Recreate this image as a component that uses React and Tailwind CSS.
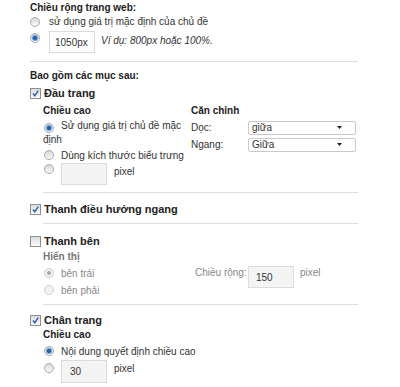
import React from 'react';

function Radio({ checked = false, disabled = false, className = '' }) {
  return (
    <span
      className={`inline-flex shrink-0 items-center justify-center w-[10px] h-[10px] rounded-full border ${
        disabled ? 'border-[#cfcfcf] bg-[#f2f2f2]' : 'border-[#a9a9a9] bg-gradient-to-b from-[#d8d8d8] to-[#fbfbfb]'
      } ${className}`}
    >
      {checked && (
        <span
          className={`block w-[4px] h-[4px] rounded-full ${
            disabled ? 'bg-[#a8a8a8]' : 'bg-[#1f5fae] ring-1 ring-[#6d9fd6]'
          }`}
        />
      )}
    </span>
  );
}

function Checkbox({ checked = false }) {
  return (
    <span className="relative inline-block shrink-0 w-[11px] h-[11px] border border-[#8e8f8f] bg-gradient-to-b from-[#dcdcdc] to-[#fafafa]">
      {checked && (
        <svg viewBox="0 0 11 11" className="absolute left-[-1px] top-[-1px] w-[11px] h-[11px]">
          <path d="M3 5.5 L4.8 7.8 L8.2 2.6" fill="none" stroke="#2a5ea9" strokeWidth="1.4" />
        </svg>
      )}
    </span>
  );
}

function TextBox({ value = '', gray = true, className = '' }) {
  return (
    <div
      className={`flex shrink-0 items-center w-[46px] h-[22px] border border-[#dcdcdc] whitespace-nowrap text-[10px] text-[#333] ${
        gray ? 'bg-[#f4f4f4]' : 'bg-white'
      } ${className}`}
    >
      {value}
    </div>
  );
}

function Select({ value }) {
  return (
    <div className="flex items-center justify-between w-[108px] h-[14px] pl-[3px] pr-[13px] border border-[#cacaca] rounded-[2px] bg-white text-[#333]">
      <span className="leading-[12px]">{value}</span>
      <svg viewBox="0 0 5 3" className="w-[5px] h-[3px]">
        <path d="M0 0 H5 L2.5 3 Z" fill="#222" />
      </svg>
    </div>
  );
}

function Section({ checked, label }) {
  return (
    <div className="flex items-center h-[14px] gap-[3px]">
      <Checkbox checked={checked} />
      <span className="text-[11px] font-bold text-[#222] leading-[14px]">{label}</span>
    </div>
  );
}

export default function App() {
  return (
    <div className="w-[400px] h-[387px] overflow-hidden bg-white font-['Liberation_Sans',Arial,sans-serif] text-[10px] text-[#333]">
      <div className="w-[358px] pl-[30px]">
        <div className="h-[15px] leading-[15px] font-bold text-[#222]">Chiều rộng trang web:</div>
        <div className="flex items-center h-[14px] gap-[9px]">
          <Radio />
          <span className="leading-[14px]">sử dụng giá trị mặc định của chủ đề</span>
        </div>
        <div className="flex items-start mt-[2px] h-[22px]">
          <Radio checked className="mt-[2px]" />
          <TextBox value="1050px" gray={false} className="ml-[9px] pl-[5px]" />
          <span className="ml-[6px] mt-[4px] leading-[12px] italic">Ví dụ: 800px hoặc 100%.</span>
        </div>

        <div className="mt-[8px] h-px bg-[#dedede]" />

        <div className="mt-[7px] h-[14px] leading-[14px] font-bold text-[#222]">Bao gồm các mục sau:</div>
        <div className="mt-[3px]">
          <Section checked label="Đầu trang" />
        </div>

        <div className="flex pl-[13px]">
          <div className="w-[146px]">
            <div className="mt-[4px] h-[14px] leading-[14px] font-bold text-[#222]">Chiều cao</div>
            <div className="mt-[1px] leading-[14px]">
              <Radio checked className="ml-[1px] mr-[7px] align-[-1px]" />
              Sử dụng giá trị chủ đề mặc định
            </div>
            <div className="flex items-center mt-[1px] h-[14px] gap-[7px] pl-[1px]">
              <Radio />
              <span>Dùng kích thước biểu trưng</span>
            </div>
            <div className="flex items-start mt-[1px] h-[22px] pl-[1px]">
              <Radio className="mt-[1px]" />
              <TextBox className="ml-[7px]" />
              <span className="ml-[7px] mt-[2px] leading-[14px]">pixel</span>
            </div>
          </div>
          <div className="pl-[2px]">
            <div className="mt-[4px] h-[14px] leading-[14px] font-bold text-[#222]">Căn chỉnh</div>
            <div className="flex items-center mt-[2px]">
              <span className="w-[57px]">Dọc:</span>
              <Select value="giữa" />
            </div>
            <div className="flex items-center mt-[2px]">
              <span className="w-[57px]">Ngang:</span>
              <Select value="Giữa" />
            </div>
          </div>
        </div>

        <div className="mt-[7px] ml-[13px] h-px bg-[#dedede]" />

        <div className="mt-[9px]">
          <Section checked label="Thanh điều hướng ngang" />
        </div>

        <div className="mt-[7px] ml-[13px] h-px bg-[#dedede]" />

        <div className="mt-[10px]">
          <Section label="Thanh bên" />
        </div>
        <div className="pl-[13px] text-[#888]">
          <div className="mt-[2px] h-[14px] leading-[14px] font-bold text-[#777]">Hiển thị</div>
          <div className="flex mt-[2px]">
            <div className="w-[152px]">
              <div className="flex items-center h-[14px] gap-[7px] pl-[1px]">
                <Radio checked disabled />
                <span>bên trái</span>
              </div>
              <div className="flex items-center mt-[3px] h-[14px] gap-[7px] pl-[1px]">
                <Radio disabled />
                <span>bên phải</span>
              </div>
            </div>
            <div className="flex items-start h-[22px]">
              <span className="w-[53px] shrink-0 whitespace-nowrap leading-[14px]">Chiều rộng:</span>
              <TextBox value="150" className="pl-[7px]" />
              <span className="ml-[6px] leading-[14px]">pixel</span>
            </div>
          </div>
        </div>

        <div className="mt-[7px] ml-[13px] h-px bg-[#dedede]" />

        <div className="mt-[8px]">
          <Section checked label="Chân trang" />
        </div>
        <div className="pl-[13px]">
          <div className="mt-[1px] h-[14px] leading-[14px] font-bold text-[#222]">Chiều cao</div>
          <div className="flex items-center mt-[2px] h-[14px] gap-[7px] pl-[1px]">
            <Radio checked />
            <span>Nội dung quyết định chiều cao</span>
          </div>
          <div className="flex items-start mt-[2px] h-[23px] pl-[1px]">
            <Radio className="mt-[3px]" />
            <TextBox value="30" className="ml-[7px] h-[23px] pl-[8px]" />
            <span className="ml-[7px] mt-[2px] leading-[14px]">pixel</span>
          </div>
        </div>
      </div>
    </div>
  );
}
